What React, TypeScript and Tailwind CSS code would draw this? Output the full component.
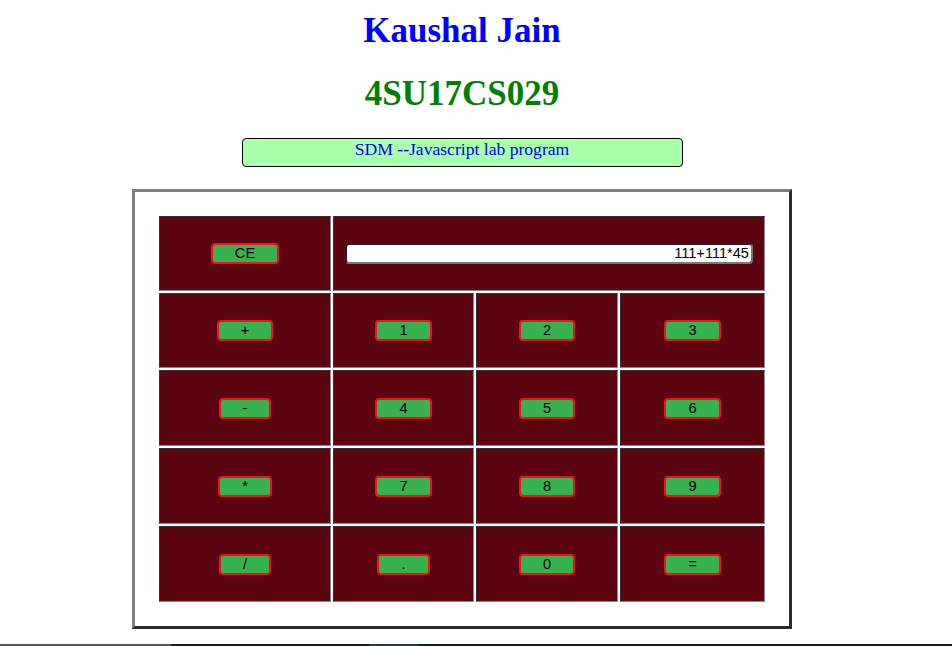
import React from "react";

const btnCls =
  "h-[21px] px-[22px] border-2 border-[#ee1122] rounded-[4px] bg-[#37b24f] text-black text-[14.6px] leading-[17px] font-['Liberation_Sans',Arial,sans-serif]";

function Cell({ children, span }: { children?: React.ReactNode; span?: boolean }) {
  return (
    <div
      className={`flex items-center justify-center bg-[#5c0511] border border-t-[#333333] border-l-[#333333] border-b-[#8a8a8a] border-r-[#8a8a8a] ${span ? "col-span-3" : ""}`}
    >
      {children}
    </div>
  );
}

function Btn({ label }: { label: string }) {
  return <button className={btnCls}>{label}</button>;
}

export default function App() {
  const rows: string[][] = [
    ["+", "1", "2", "3"],
    ["-", "4", "5", "6"],
    ["*", "7", "8", "9"],
    ["/", ".", "0", "="],
  ];
  return (
    <div className="h-[646px] flex flex-col bg-white font-['Liberation_Serif','Times_New_Roman',serif] overflow-hidden">
      <div className="w-[924px] flex flex-col items-center">
        <div className="mt-[11px] h-[40px] leading-[40px] text-[35px] font-bold text-[#0000ff]">
          Kaushal Jain
        </div>
        <div className="mt-[23px] h-[40px] leading-[40px] text-[35px] font-bold text-[#008000]">
          4SU17CS029
        </div>
        <div className="mt-[24px] w-[441px] h-[29px] border border-black rounded-[4px] bg-[#aaffaa] text-center text-[17.6px] leading-[20px] text-[#0000ff]">
          SDM <span className="font-bold">--</span>Javascript lab program
        </div>
        <div className="mt-[22px] w-[660px] border-[3px] border-t-[#808080] border-l-[#808080] border-b-[#2b2b2b] border-r-[#2b2b2b] p-[24px] bg-white">
          <div className="grid grid-cols-[172px_141px_142px_145px] grid-rows-[75px_75px_76px_76px_76px] gap-[2px] w-[606px]">
            <Cell>
              <Btn label="CE" />
            </Cell>
            <Cell span>
              <input
                readOnly
                value="111+111*45"
                className="w-[408px] h-[21px] bg-white border-2 border-t-[#222222] border-l-[#222222] border-b-[#777777] border-r-[#777777] rounded-[4px] text-right pr-[2px] text-[14.6px] text-black font-['Liberation_Sans',Arial,sans-serif] outline-none"
              />
            </Cell>
            {rows.map((r, i) =>
              r.map((k, j) => (
                <Cell key={`${i}-${j}`}>
                  <Btn label={k} />
                </Cell>
              ))
            )}
          </div>
        </div>
      </div>
      <div className="mt-auto h-[2px] flex">
        <div className="w-[171px] bg-[#4a5a6a]" />
        <div className="w-[199px] bg-[#0f2233]" />
        <div className="w-[48px] bg-[#123f66]" />
        <div className="flex-1 bg-[#0f2233]" />
      </div>
    </div>
  );
}
